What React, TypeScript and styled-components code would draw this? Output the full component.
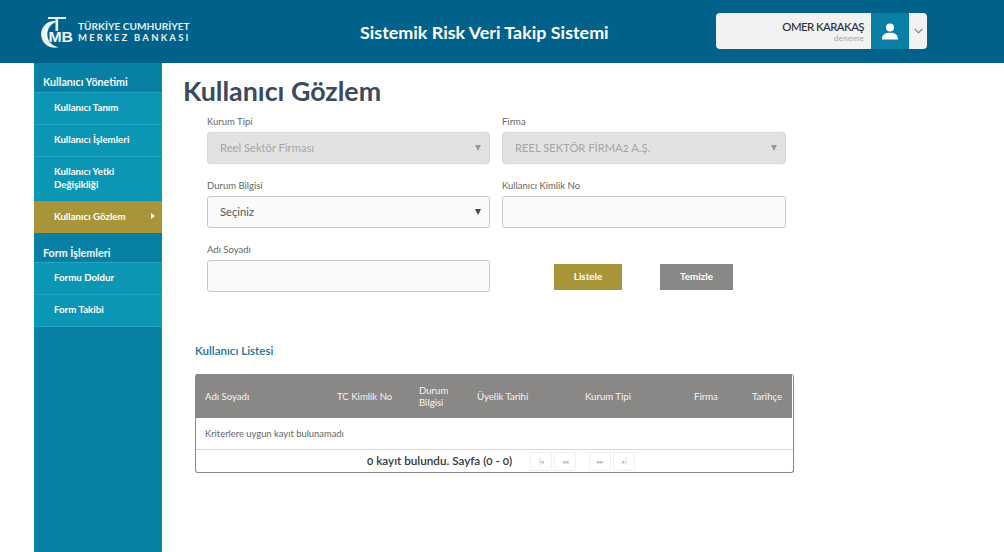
import React from "react";
import styled, { createGlobalStyle } from "styled-components";

const font = `Lato, "Open Sans", "Liberation Sans", sans-serif`;

const GlobalStyle = createGlobalStyle`
    html, body {
        margin: 0;
        padding: 0;
        background: #fff;
        font-family: ${font};
        font-variant-numeric: oldstyle-nums;
    }
    * { box-sizing: border-box; }
`;

const Page = styled.div`
    width: 1004px;
    height: 552px;
    overflow: hidden;
    display: flex;
    flex-direction: column;
`;

const Header = styled.header`
    flex: 0 0 63px;
    display: flex;
    align-items: center;
    padding: 0 77px 0 40px;
    background: #00628a;
`;

const Logo = styled.div`
    flex: 0 0 320px;
    display: flex;
    align-items: center;
    gap: 5px;
    color: #e6f0f4;
`;

const LogoText = styled.div`
    display: flex;
    flex-direction: column;
    font-weight: 700;
    line-height: 11px;
`;

const LogoTop = styled.span`
    font-size: 10.1px;
    letter-spacing: 0;
`;

const LogoBottom = styled.span`
    font-size: 9.5px;
    letter-spacing: 2.2px;
`;

const AppTitle = styled.h1`
    margin: 0 auto 0 0;
    font-size: 17.9px;
    font-weight: 700;
    color: #fff;
    white-space: nowrap;
`;

const UserBox = styled.div`
    width: 211px;
    height: 36px;
    display: flex;
    margin-top: -1px;
    border-radius: 4px;
    overflow: hidden;
    background: #f2f2f2;
`;

const UserInfo = styled.div`
    flex: 1;
    display: flex;
    flex-direction: column;
    align-items: flex-end;
    justify-content: center;
    padding-right: 7px;
`;

const UserName = styled.span`
    font-size: 11.4px;
    line-height: 13px;
    letter-spacing: -0.55px;
    font-weight: 500;
    color: #2b2f33;
`;

const UserRole = styled.span`
    font-size: 8px;
    line-height: 10px;
    letter-spacing: 0.3px;
    color: #a3a3a3;
`;

const Avatar = styled.div`
    flex: 0 0 38px;
    display: flex;
    align-items: center;
    justify-content: center;
    background: #0a7fa6;
`;

const Caret = styled.div`
    flex: 0 0 18px;
    display: flex;
    align-items: center;
    justify-content: center;
`;

const Body = styled.div`
    flex: 1;
    display: flex;
    padding-left: 34px;
`;

const Sidebar = styled.nav`
    flex: 0 0 128px;
    background: #0880a6;
`;

const GroupTitle = styled.div<{ $h: number; $top: number }>`
    height: ${p => p.$h}px;
    display: flex;
    align-items: center;
    padding: ${p => p.$top}px 0 0 9px;
    font-size: 10.7px;
    font-weight: 700;
    color: #f2fafc;
`;

const NavItem = styled.div<{ $h?: number; $active?: boolean }>`
    height: ${p => p.$h ?? 32}px;
    display: flex;
    align-items: center;
    justify-content: space-between;
    padding: 0 7px 3px 20px;
    font-size: 9.7px;
    line-height: 12.5px;
    font-weight: 700;
    color: #fff;
    background: ${p => (p.$active ? "#a8953a" : "#0b96b6")};
    border-top: 1px solid ${p => (p.$active ? "#a8953a" : "#23a5c1")};
`;

const NavArrow = styled.span`
    width: 0;
    height: 0;
    border-left: 4px solid #fff;
    border-top: 3.5px solid transparent;
    border-bottom: 3.5px solid transparent;
`;

const NavEnd = styled.div`
    height: 1px;
    background: #23a5c1;
`;

const Main = styled.main`
    flex: 1;
    padding: 13px 0 0 21px;
`;

const PageTitle = styled.h2`
    margin: 0 0 7px;
    font-size: 26.8px;
    line-height: 31px;
    font-weight: 700;
    color: #3b4a5c;
`;

const FormGrid = styled.div`
    width: 579px;
    margin-left: 24px;
    display: grid;
    grid-template-columns: 283px 284px;
    column-gap: 12px;
    row-gap: 14px;
`;

const Field = styled.div`
    display: flex;
    flex-direction: column;
`;

const Label = styled.label`
    height: 18px;
    padding-top: 1px;
    font-size: 9.5px;
    line-height: 14px;
    color: #666;
`;

const SelectBox = styled.div<{ $disabled?: boolean }>`
    height: 32px;
    display: flex;
    align-items: center;
    justify-content: space-between;
    padding: 0 8px 2px 12px;
    font-size: 11.2px;
    color: ${p => (p.$disabled ? "#a5a5a5" : "#555")};
    background: ${p => (p.$disabled ? "#e2e2e2" : "#fafafa")};
    border: 1px solid ${p => (p.$disabled ? "#d8d8d8" : "#c8c8c8")};
    border-radius: 3px;
`;

const SelectArrow = styled.span<{ $disabled?: boolean }>`
    width: 0;
    height: 0;
    margin-top: 2px;
    border-top: 6px solid ${p => (p.$disabled ? "#9a9a9a" : "#444")};
    border-left: 3px solid transparent;
    border-right: 3px solid transparent;
`;

const TextInput = styled.input`
    height: 32px;
    background: #fafafa;
    border: 1px solid #c8c8c8;
    border-radius: 3px;
    outline: none;
`;

const Actions = styled.div`
    display: flex;
    align-items: flex-start;
    gap: 38px;
    padding: 22px 0 0 52px;
`;

const Button = styled.button<{ $w: number; $bg: string }>`
    width: ${p => p.$w}px;
    height: 26px;
    border: 0;
    padding: 0 0 2px;
    font-family: inherit;
    font-size: 9.8px;
    font-weight: 700;
    color: #fff;
    background: ${p => p.$bg};
`;

const SectionTitle = styled.h3`
    margin: 51px 0 15px 12px;
    font-size: 11.6px;
    line-height: 16px;
    font-weight: 600;
    color: #1f6f92;
`;

const TableWrap = styled.div`
    width: 599px;
    margin-left: 12px;
    border: 1px solid #8a8886;
    border-top: 0;
    border-radius: 3px;
`;

const cols = "132px 82px 58px 108px 109px 58px 50px";

const HeadRow = styled.div`
    height: 44px;
    margin-right: 1px;
    padding-top: 2px;
    display: grid;
    grid-template-columns: ${cols};
    align-items: center;
    background: #8a8886;
    font-size: 9.6px;
    line-height: 12px;
    color: #f4f4f4;
`;

const HeadCell = styled.div`
    padding-left: 9px;
`;

const EmptyRow = styled.div`
    height: 32px;
    display: flex;
    align-items: center;
    padding: 0 0 1px 9px;
    font-size: 9.4px;
    color: #666;
    border-bottom: 1px solid #d6d6d6;
`;

const Pager = styled.div`
    height: 22px;
    display: flex;
    align-items: center;
    padding-left: 171px;
    font-size: 11.7px;
    font-weight: 600;
    color: #333;
`;

const PagerInfo = styled.span`
    margin: 0 18px 2px 0;
`;

const PagerButton = styled.span<{ $gap?: number }>`
    width: 22px;
    height: 19px;
    margin-right: ${p => p.$gap ?? 2}px;
    display: flex;
    align-items: center;
    justify-content: center;
    font-size: 7px;
    font-weight: 400;
    letter-spacing: -0.5px;
    color: #bdbdbd;
    border: 1px solid #f0f0f0;
    border-radius: 2px;
`;

const headers = ["Adı Soyadı", "TC Kimlik No", "Durum Bilgisi", "Üyelik Tarihi", "Kurum Tipi", "Firma", "Tarihçe"];

function TcmbLogo() {
    return (
        <svg width="33" height="32" viewBox="0 0 33 32" aria-hidden="true">
            <path d="M19 5.5 A13.5 13.5 0 1 0 19 31 A12.8 12.8 0 0 1 19 5.5 Z" fill="#eef5f8" />
            <rect x="8" y="1" width="18" height="2" fill="#eef5f8" />
            <rect x="15.5" y="1" width="2.6" height="14" fill="#eef5f8" />
            <text x="8.5" y="26" fontFamily="'Liberation Sans', sans-serif" fontWeight="700" fontSize="15" fill="#eef5f8" stroke="#00628a" strokeWidth="0.6" paintOrder="stroke" textLength="24.5" lengthAdjust="spacingAndGlyphs">MB</text>
        </svg>
    );
}

function UserIcon() {
    return (
        <svg width="18" height="17" viewBox="0 0 18 17" aria-hidden="true">
            <circle cx="9" cy="4.6" r="4" fill="#fff" />
            <path d="M1 16.5 C1 11.5 4 9.8 9 9.8 C14 9.8 17 11.5 17 16.5 Z" fill="#fff" />
        </svg>
    );
}

function ChevronIcon() {
    return (
        <svg width="9" height="6" viewBox="0 0 9 6" aria-hidden="true">
            <path d="M0.7 0.8 L4.5 4.8 L8.3 0.8" fill="none" stroke="#6f7478" strokeWidth="1.1" />
        </svg>
    );
}

export default function App() {
    return (
        <Page>
            <GlobalStyle />
            <Header>
                <Logo>
                    <TcmbLogo />
                    <LogoText>
                        <LogoTop>TÜRKİYE CUMHURİYET</LogoTop>
                        <LogoBottom>MERKEZ BANKASI</LogoBottom>
                    </LogoText>
                </Logo>
                <AppTitle>Sistemik Risk Veri Takip Sistemi</AppTitle>
                <UserBox>
                    <UserInfo>
                        <UserName>OMER KARAKAŞ</UserName>
                        <UserRole>deneme</UserRole>
                    </UserInfo>
                    <Avatar><UserIcon /></Avatar>
                    <Caret><ChevronIcon /></Caret>
                </UserBox>
            </Header>
            <Body>
                <Sidebar>
                    <GroupTitle $h={29} $top={7}>Kullanıcı Yönetimi</GroupTitle>
                    <NavItem>Kullanıcı Tanım</NavItem>
                    <NavItem>Kullanıcı İşlemleri</NavItem>
                    <NavItem $h={45}>Kullanıcı Yetki<br />Değişikliği</NavItem>
                    <NavItem $active>Kullanıcı Gözlem<NavArrow /></NavItem>
                    <GroupTitle $h={29} $top={10}>Form İşlemleri</GroupTitle>
                    <NavItem>Formu Doldur</NavItem>
                    <NavItem>Form Takibi</NavItem>
                    <NavEnd />
                </Sidebar>
                <Main>
                    <PageTitle>Kullanıcı Gözlem</PageTitle>
                    <FormGrid>
                        <Field>
                            <Label>Kurum Tipi</Label>
                            <SelectBox $disabled>Reel Sektör Firması<SelectArrow $disabled /></SelectBox>
                        </Field>
                        <Field>
                            <Label>Firma</Label>
                            <SelectBox $disabled>REEL SEKTÖR FİRMA2 A.Ş.<SelectArrow $disabled /></SelectBox>
                        </Field>
                        <Field>
                            <Label>Durum Bilgisi</Label>
                            <SelectBox>Seçiniz<SelectArrow /></SelectBox>
                        </Field>
                        <Field>
                            <Label>Kullanıcı Kimlik No</Label>
                            <TextInput />
                        </Field>
                        <Field>
                            <Label>Adı Soyadı</Label>
                            <TextInput />
                        </Field>
                        <Actions>
                            <Button $w={68} $bg="#a8953a">Listele</Button>
                            <Button $w={73} $bg="#8a8886">Temizle</Button>
                        </Actions>
                    </FormGrid>
                    <SectionTitle>Kullanıcı Listesi</SectionTitle>
                    <TableWrap>
                        <HeadRow>
                            {headers.map(h => <HeadCell key={h}>{h}</HeadCell>)}
                        </HeadRow>
                        <EmptyRow>Kriterlere uygun kayıt bulunamadı</EmptyRow>
                        <Pager>
                            <PagerInfo>0 kayıt bulundu. Sayfa (0 - 0)</PagerInfo>
                            <PagerButton>|◂</PagerButton>
                            <PagerButton $gap={13}>◂◂</PagerButton>
                            <PagerButton>▸▸</PagerButton>
                            <PagerButton>▸|</PagerButton>
                        </Pager>
                    </TableWrap>
                </Main>
            </Body>
        </Page>
    );
}
